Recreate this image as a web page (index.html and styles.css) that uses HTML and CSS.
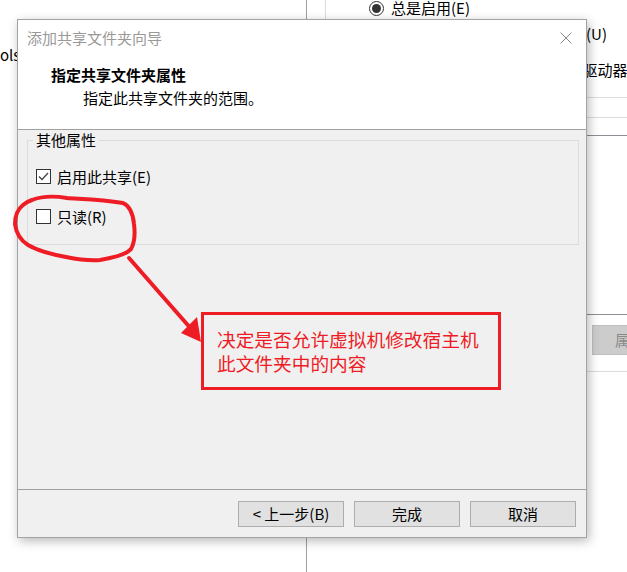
FILE: index.html
```html
<!DOCTYPE html>
<html lang="zh-CN">
<head>
<meta charset="utf-8">
<title>添加共享文件夹向导</title>
<link rel="stylesheet" href="styles.css">
</head>
<body>
<div class="desktop">
  <div class="bg-left"><span class="bg-cut">ols</span></div>
  <div class="bg-right">
    <div class="panel">
      <div class="radio-row"><span class="radio on"></span><span>总是启用(E)</span></div>
      <div class="radio-row row-u"><span class="radio"></span><span>在下次关机或挂起前一直启用(U)</span></div>
      <div class="check-row row-m"><span class="bg-box"></span><span>在 Windows 客户机中映射为网络驱动器(M)</span></div>
      <div class="hline light l1"></div>
      <div class="hline light l2"></div>
      <div class="hline dark l3"></div>
      <div class="hline dark l4"></div>
      <div class="bg-btn">属性(P)</div>
      <div class="hline light l5"></div>
    </div>
  </div>
</div>

<div class="dialog">
  <div class="titlebar">
    <span class="title">添加共享文件夹向导</span>
    <svg class="close" width="12" height="12" viewBox="0 0 12 12"><path d="M0.5 0.5L11.5 11.5M11.5 0.5L0.5 11.5" stroke="#8a8a8a" stroke-width="1" fill="none"/></svg>
  </div>
  <div class="header">
    <div class="h-title">指定共享文件夹属性</div>
    <div class="h-sub">指定此共享文件夹的范围。</div>
  </div>
  <div class="body">
    <fieldset class="group">
      <legend>其他属性</legend>
      <div class="rows">
        <label class="cb-row"><span class="cb"><svg width="13" height="13" viewBox="0 0 13 13"><path d="M2 6.5L5 9.5L11 3" stroke="#444" stroke-width="1.3" fill="none"/></svg></span><span>启用此共享(E)</span></label>
        <label class="cb-row"><span class="cb"></span><span>只读(R)</span></label>
      </div>
    </fieldset>
  </div>
  <div class="footer">
    <button class="btn">&lt; 上一步(B)</button>
    <button class="btn">完成</button>
    <button class="btn">取消</button>
  </div>
</div>

<svg class="ink" width="627" height="572" viewBox="0 0 627 572">
  <path d="M32 200 C42 196 55 196 67 198 C80 199 100 199 123 203 C130 206 133 214 134 224 C135 232 135 242 131 249 C126 255 112 258 100 260 C88 261 76 259 66 257 C55 255 40 252 28 245 C20 240 16 232 15 224 C15 216 18 209 23 205 C26 202 29 201 32 200" stroke="#ee1c25" stroke-width="4" fill="none" stroke-linecap="round" stroke-linejoin="round"/>
  <path d="M129 258 L193 331" stroke="#ee1c25" stroke-width="4" fill="none" stroke-linecap="round"/>
  <polygon points="201,342 181,333 197,317" fill="#ee1c25"/>
</svg>
<div class="note"><div class="note-line">决定是否允许虚拟机修改宿主机</div><div class="note-line">此文件夹中的内容</div></div>
</body>
</html>
```

FILE: styles.css
```css
* { box-sizing: border-box; }
html, body { margin: 0; padding: 0; }
body {
  width: 627px;
  height: 572px;
  overflow: hidden;
  position: relative;
  background: #fff;
  font-family: "Noto Sans CJK SC", "Noto Sans", sans-serif;
  font-size: 15px;
  color: #000;
}

/* background window */
.desktop { display: flex; height: 572px; }
.bg-left {
  width: 307px;
  flex: none;
  border-right: 1px solid #a0a0a0;
  padding-top: 45px;
  line-height: 20px;
}
.bg-right { flex: 1; min-width: 0; }
.panel {
  margin-left: 18px;
  border-left: 1px solid #dcdcdc;
  height: 400px;
  padding-left: 43px;
  width: 600px;
}
.radio-row {
  display: flex;
  align-items: center;
  gap: 7px;
  height: 16px;
  line-height: 16px;
  white-space: nowrap;
}
.row-u { margin-top: 8px; height: 20px; line-height: 20px; }
.radio {
  width: 15px; height: 15px;
  border: 1px solid #333;
  border-radius: 50%;
  display: flex; align-items: center; justify-content: center;
  flex: none;
}
.radio.on::after {
  content: "";
  width: 9px; height: 9px;
  border-radius: 50%;
  background: #333;
}
.check-row {
  display: flex; align-items: center; gap: 7px;
  margin-top: 16px;
  height: 20px; line-height: 20px;
  white-space: nowrap;
  margin-left: -29px;
}
.bg-box { width: 15px; height: 15px; border: 1px solid #333; flex: none; }
.hline { height: 1px; margin-left: -43px; }
.hline.light { background: #dcdcdc; }
.hline.dark { background: #8e8e96; }
.l1 { margin-top: 17px; }
.l2 { margin-top: 19px; }
.l3 { margin-top: 17px; }
.l4 { margin-top: 178px; }
.l5 { margin-top: 16px; }
.bg-btn {
  margin-top: 10px;
  margin-left: 223px;
  width: 110px;
  height: 30px;
  background: #cccccc;
  border: 1px solid #bfbfbf;
  color: #8a8a8a;
  line-height: 28px;
  padding-left: 22px;
  white-space: nowrap;
}

/* dialog */
.dialog {
  position: absolute;
  left: 17px;
  top: 19px;
  width: 570px;
  height: 519px;
  border: 1px solid #a3a3a3;
  background: #fff;
  display: flex;
  flex-direction: column;
  box-shadow: 2px 3px 10px rgba(0,0,0,0.28);
}
.titlebar {
  height: 38px;
  flex: none;
  display: flex;
  align-items: center;
  justify-content: space-between;
  padding: 0 14px 2px 9px;
}
.title { color: #999; line-height: 20px; }
.close { display: block; margin-top: 0; }
.header {
  height: 72px;
  flex: none;
  border-bottom: 1px solid #a0a0a0;
  padding: 6px 0 0 33px;
}
.h-title { font-weight: 700; line-height: 22px; }
.h-sub { line-height: 22px; margin-top: 1px; padding-left: 32px; }
.body {
  flex: 1;
  background: #f0f0f0;
  padding: 0 7px 0 9px;
}
.group {
  margin: 0;
  border: 1px solid #dcdcdc;
  padding: 16px 0 17px 8px;
  min-width: 0;
}
.group legend {
  padding: 0 3px;
  margin-left: -3px;
  line-height: 20px;
}
.rows { display: flex; flex-direction: column; gap: 19px; }
.cb-row {
  display: flex;
  align-items: center;
  height: 21px;
  line-height: 21px;
}
.cb {
  width: 15px; height: 15px;
  border: 1px solid #333;
  background: #fff;
  margin-right: 6px;
  display: flex; align-items: center; justify-content: center;
  flex: none;
}
.cb svg { display: block; }
.footer {
  height: 48px;
  flex: none;
  border-top: 1px solid #a0a0a0;
  background: #f0f0f0;
  display: flex;
  justify-content: flex-end;
  align-items: flex-start;
  gap: 10px;
  padding: 11px 10px 0 0;
}
.btn {
  width: 106px;
  height: 26px;
  background: #e1e1e1;
  border: 1px solid #adadad;
  font-family: inherit;
  font-size: 15px;
  line-height: 22px;
  color: #000;
  padding: 0;
  margin: 0;
}

/* annotations */
.ink {
  position: absolute;
  left: 0; top: 0;
  pointer-events: none;
}
.note {
  position: absolute;
  left: 201px;
  top: 312px;
  width: 300px;
  height: 78px;
  border: 3px solid #ee1c25;
  color: #ee1c25;
  font-size: 18.7px;
  padding: 12px 0 0 13px;
  white-space: nowrap;
  display: flex;
  flex-direction: column;
}
.note-line { height: 24px; line-height: 24px; }
```
